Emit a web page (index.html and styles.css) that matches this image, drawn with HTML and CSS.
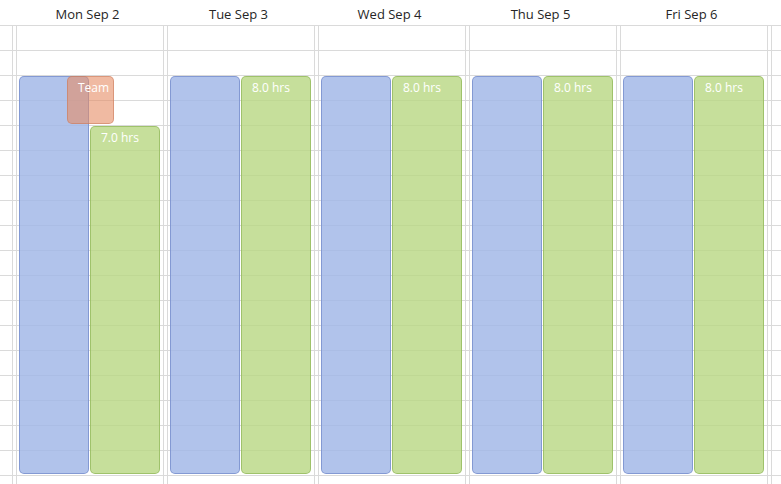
FILE: index.html
```html
<!DOCTYPE html>
<html>
<head>
<meta charset="utf-8">
<link rel="stylesheet" href="styles.css">
</head>
<body>
<div class="cal">
  <div class="head">
    <div class="hd">Mon Sep 2</div>
    <div class="hd">Tue Sep 3</div>
    <div class="hd">Wed Sep 4</div>
    <div class="hd">Thu Sep 5</div>
    <div class="hd">Fri Sep 6</div>
    <div class="hd rest"></div>
  </div>
  <div class="grid">
    <div class="gutter"></div>
    <div class="day"><div class="lane">
      <div class="ev blue full left"></div>
      <div class="ev green right late"><span>7.0 hrs</span></div>
      <div class="ev team"><span>Team</span></div>
    </div></div>
    <div class="day"><div class="lane">
      <div class="ev blue full left"></div>
      <div class="ev green full right"><span>8.0 hrs</span></div>
    </div></div>
    <div class="day"><div class="lane">
      <div class="ev blue full left"></div>
      <div class="ev green full right"><span>8.0 hrs</span></div>
    </div></div>
    <div class="day"><div class="lane">
      <div class="ev blue full left"></div>
      <div class="ev green full right"><span>8.0 hrs</span></div>
    </div></div>
    <div class="day"><div class="lane">
      <div class="ev blue full left"></div>
      <div class="ev green full right"><span>8.0 hrs</span></div>
    </div></div>
    <div class="day rest"><div class="lane"></div></div>
  </div>
</div>
</body>
</html>
```
FILE: styles.css
```css
html, body {
  margin: 0;
  padding: 0;
  background: #fff;
}
body {
  width: 781px;
  height: 484px;
  overflow: hidden;
  font-family: "Open Sans", "Noto Sans", sans-serif;
}
.cal {
  width: 781px;
}
.head {
  display: flex;
  height: 25px;
  padding-left: 12px;
  border-bottom: 1px solid #dadada;
}
.hd {
  flex: 0 0 151px;
  text-align: center;
  font-size: 13px;
  line-height: 29px;
  color: #262626;
  white-space: nowrap;
}
.grid {
  display: flex;
  height: 458px;
  background: repeating-linear-gradient(to bottom, transparent 0 24px, #dadada 24px 25px);
}
.gutter {
  flex: 0 0 12px;
}
.day {
  flex: 0 0 151px;
  box-sizing: border-box;
  border-left: 1px solid #dadada;
  display: flex;
}
.hd.rest,
.day.rest {
  flex: 1 1 auto;
  min-width: 0;
}
.lane {
  flex: 1;
  margin-left: 3px;
  border-left: 1px solid #dadada;
  position: relative;
}
.ev {
  position: absolute;
  box-sizing: border-box;
  border-radius: 5px;
  color: #fff;
  font-size: 12px;
  line-height: 16px;
  padding: 3px 0 0 10px;
}
.blue {
  background: rgba(160, 182, 230, 0.82);
  border: 1px solid rgba(120, 143, 205, 0.8);
}
.green {
  background: rgba(184, 215, 130, 0.8);
  border: 1px solid rgba(150, 188, 95, 0.8);
}
.full {
  top: 50px;
  height: 398px;
}
.left {
  left: 2px;
  width: 70px;
}
.right {
  left: 73px;
  width: 70px;
}
.late {
  top: 100px;
  height: 348px;
}
.team {
  top: 50px;
  left: 50px;
  width: 47px;
  height: 48px;
  background: rgba(230, 140, 100, 0.6);
  border: 1px solid rgba(200, 120, 90, 0.55);
}
```
